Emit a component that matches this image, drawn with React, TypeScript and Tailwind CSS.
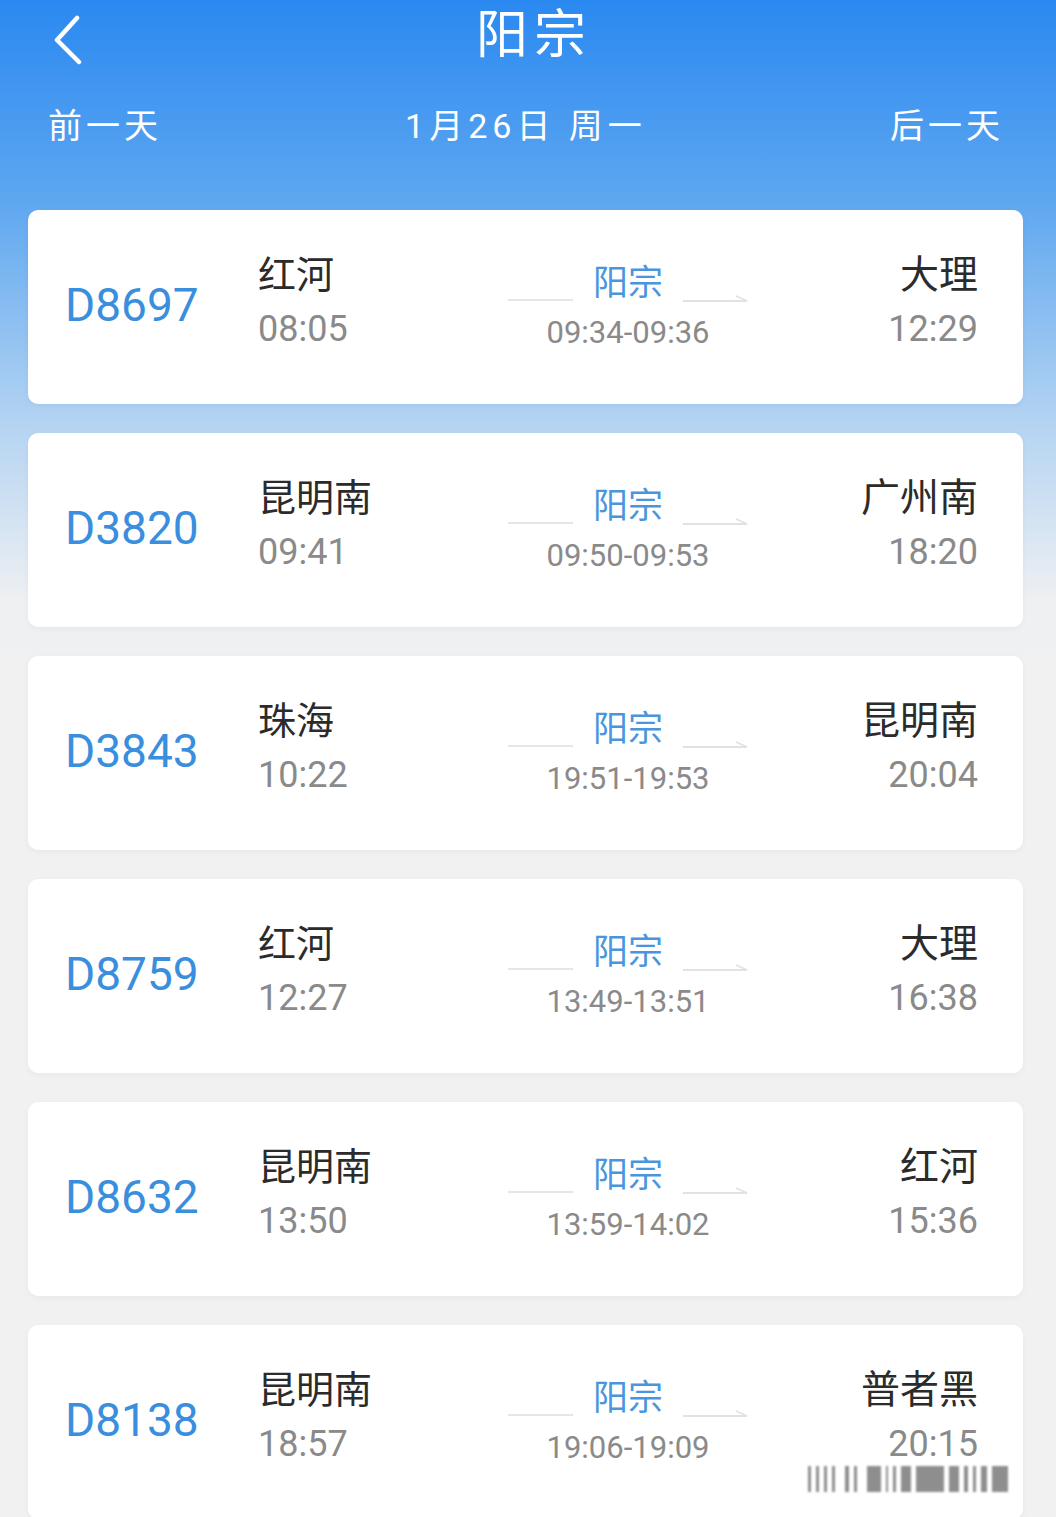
const trains = [
  { no: 'D8697', from: '红河', dep: '08:05', stop: '09:34-09:36', to: '大理', arr: '12:29' },
  { no: 'D3820', from: '昆明南', dep: '09:41', stop: '09:50-09:53', to: '广州南', arr: '18:20' },
  { no: 'D3843', from: '珠海', dep: '10:22', stop: '19:51-19:53', to: '昆明南', arr: '20:04' },
  { no: 'D8759', from: '红河', dep: '12:27', stop: '13:49-13:51', to: '大理', arr: '16:38' },
  { no: 'D8632', from: '昆明南', dep: '13:50', stop: '13:59-14:02', to: '红河', arr: '15:36' },
  { no: 'D8138', from: '昆明南', dep: '18:57', stop: '19:06-19:09', to: '普者黑', arr: '20:15' },
];

type Train = (typeof trains)[number];

function TrainCard({ t }: { t: Train }) {
  return (
    <div className="flex h-[194px] items-start rounded-[10px] bg-white pl-[37px] pr-[45px] shadow-[0_2px_6px_rgba(0,0,0,0.04)]">
      <div className="mt-[67px] w-[193px] text-[46px] leading-[56px] text-[#3a8ede]">{t.no}</div>
      <div className="mt-[42px] w-[250px]">
        <div className="text-[38px] leading-[46px] text-[#2b2b2b]">{t.from}</div>
        <div className="mt-[8px] text-[36px] leading-[46px] text-[#8a8a8a]">{t.dep}</div>
      </div>
      <div className="mt-[52px] flex w-[240px] flex-col items-center">
        <div className="flex items-end">
          <div className="mb-[5px] h-[2px] w-[65px] bg-[#e6e6e6]" />
          <div className="mx-[20px] text-[35px] leading-[44px] text-[#4a96de]">阳宗</div>
          <svg width="65" height="8" viewBox="0 0 65 8" className="mb-[4px]">
            <path d="M0 7H64L53 2" fill="none" stroke="#e2e2e2" strokeWidth="1.8" />
          </svg>
        </div>
        <div className="mt-[9px] text-[31px] leading-[36px] text-[#8a8a8a]">{t.stop}</div>
      </div>
      <div className="mt-[42px] flex-1 text-right">
        <div className="text-[39px] leading-[46px] text-[#2b2b2b]">{t.to}</div>
        <div className="mt-[8px] text-[36px] leading-[46px] text-[#8a8a8a]">{t.arr}</div>
      </div>
    </div>
  );
}

export default function App() {
  return (
    <div
      className="relative h-[1517px] w-[1056px] overflow-hidden bg-[linear-gradient(180deg,#2a89f0_0px,#5ea7f0_200px,#b3d3f2_420px,#eef0f2_600px,#f1f1f1_700px)]"
      style={{ fontFamily: 'Roboto, "Noto Sans CJK SC", sans-serif' }}
    >
      <div className="relative flex h-[78px] items-center justify-center">
        <svg width="34" height="50" viewBox="0 0 34 50" className="absolute left-[50px] top-[15px]">
          <path d="M27 3L7 25L29 47" fill="none" stroke="white" strokeWidth="4.5" strokeLinecap="round" strokeLinejoin="round" />
        </svg>
        <div className="pb-[6px] pl-[12px] text-[52px] leading-[60px] tracking-[6px] text-white">阳宗</div>
      </div>
      <div className="flex items-center justify-between pl-[48px] pr-[52px] pt-[24px] text-[34px] leading-[48px] tracking-[4px] text-white">
        <span>前一天</span>
        <span className="tracking-[5px]">1月26日 周一</span>
        <span>后一天</span>
      </div>
      <div className="mt-[60px] flex flex-col gap-[29px] pl-[28px] pr-[33px]">
        {trains.map((t) => (
          <TrainCard key={t.no} t={t} />
        ))}
      </div>
      <div className="absolute left-[808px] top-[1466px] flex h-[26px] items-stretch gap-[5px] opacity-60 blur-[1.2px]">
        {[3, 3, 3, 3, 0, 4, 3, 0, 14, 2, 3, 10, 28, 10, 4, 3, 6, 16].map((w, i) => (
          <div key={i} style={{ width: w }} className={w === 0 ? 'w-[8px]' : 'bg-[#444444]'} />
        ))}
      </div>
    </div>
  );
}
